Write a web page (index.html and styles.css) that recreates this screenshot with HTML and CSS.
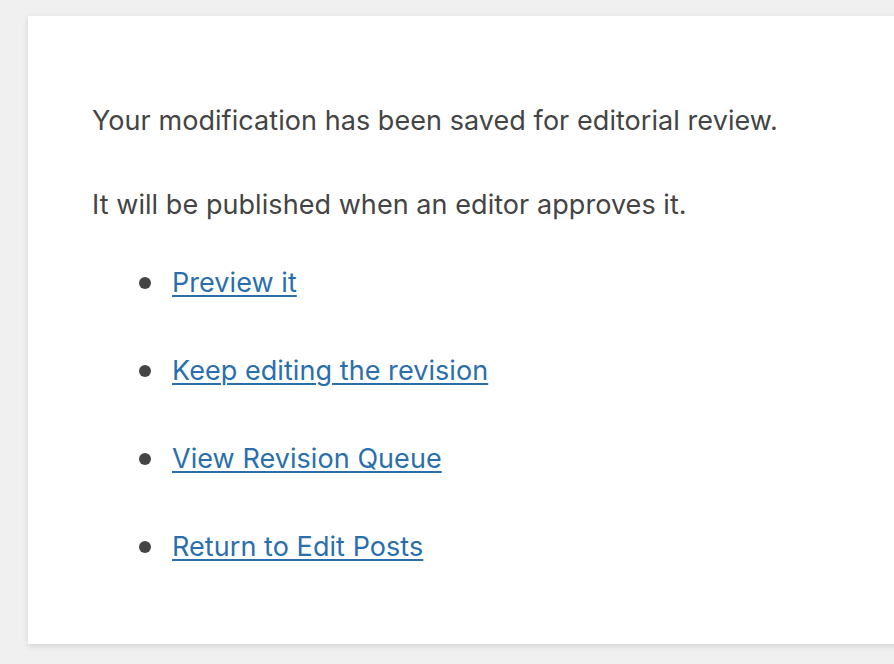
FILE: index.html
```html
<!DOCTYPE html>
<html lang="en">
<head>
  <meta charset="UTF-8" />
  <title>Revision submitted</title>
  <link rel="stylesheet" href="styles.css">
</head>
<body>
  <div class="wrap">
    <div class="notice">
      <p>Your modification has been saved for editorial review.</p>
      <p>It will be published when an editor approves it.</p>
      <ul class="actions">
        <li><a href="#">Preview it</a></li>
        <li><a href="#">Keep editing the revision</a></li>
        <li><a href="#">View Revision Queue</a></li>
        <li><a href="#">Return to Edit Posts</a></li>
      </ul>
    </div>
  </div>
</body>
</html>
```

FILE: styles.css
```css
html, body {
  margin: 0;
  background: #f0f0f0;
}
body {
  font-family: Inter, "Noto Sans", sans-serif;
  font-size: 27px;
  letter-spacing: 0.06px;
  color: #444;
  overflow: hidden;
  height: 664px;
}
.wrap {
  padding: 16px 0 0 28px;
}
.notice {
  background: #fff;
  margin-right: -40px;
  padding: 85px 64px 77px;
  box-shadow: 0 2px 6px rgba(0,0,0,0.12);
}
.notice p {
  margin: 0 0 44px;
  line-height: 40px;
}
.notice p:last-of-type {
  margin-bottom: 38px;
}
.actions {
  list-style: none;
  margin: 0;
  padding: 0 0 0 80px;
}
.actions li {
  position: relative;
  line-height: 40px;
  margin-bottom: 48px;
}
.actions li:last-child {
  margin-bottom: 0;
}
.actions li::before {
  content: "";
  position: absolute;
  left: -33px;
  top: 14px;
  width: 12px;
  height: 12px;
  border-radius: 50%;
  background: #444;
}
.actions a {
  color: #2a6fab;
  text-decoration: underline;
  text-underline-offset: 3px;
  text-decoration-thickness: 2px;
}
```
